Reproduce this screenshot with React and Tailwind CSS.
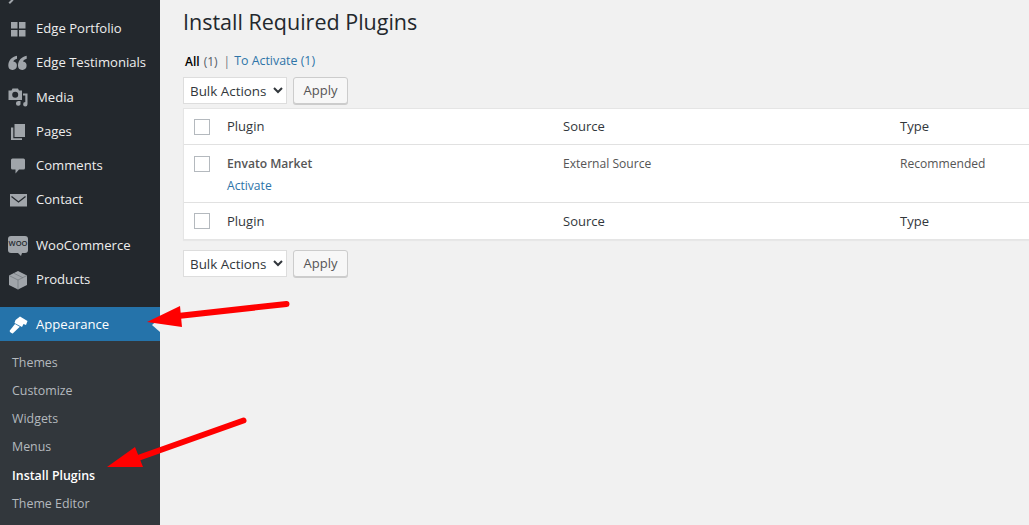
import React from "react";

const fontStack = { fontFamily: '"Open Sans", sans-serif' };

const GridIcon = () => (
  <svg viewBox="0 0 20 20" className="w-5 h-5" fill="#a0a5aa">
    <path d="M3 3h6.500v6.500H3zM11 3h6.500v6.500H11zM3 11h6.500v6.500H3zM11 11h6.500v6.500H11z" />
  </svg>
);

const QuoteIcon = () => (
  <svg viewBox="0 0 20 20" className="w-5 h-5" fill="#a0a5aa">
    <path d="M9 2.800C3.800 3.800.3 7.500.3 12.600A4.300 4.300 0 1 0 5.300 8.400C5.800 7.200 7.300 6.300 9 5.800z" />
    <path d="M18.700 2.800c-5.200 1-8.700 4.700-8.700 9.800a4.300 4.300 0 1 0 5-4.200c.5-1.200 2-2.100 3.700-2.600z" />
  </svg>
);

const MediaIcon = () => (
  <svg viewBox="0 0 20 20" className="w-5 h-5" fill="#a0a5aa">
    <path
      fillRule="evenodd"
      d="M.5 3.500h3L4.500 1.500h5.500l1 2h3v9.500H.5zM7.200 4.800a3 3 0 1 0 0 6 3 3 0 0 0 0-6z"
    />
    <path d="M15 6.500h4.500v10.800a2.200 2.200 0 1 1-2.200-2.200V8.500H15zM8 14h4.500v2.200a2.300 2.300 0 1 1-2.300-2z" />
  </svg>
);

const PagesIcon = () => (
  <svg viewBox="0 0 20 20" className="w-5 h-5" fill="#a0a5aa">
    <path d="M6.500 2H17v13H6.500z" />
    <path d="M3 5.500h2.300V16.300H14V18H3z" />
  </svg>
);

const CommentsIcon = () => (
  <svg viewBox="0 0 20 20" className="w-5 h-5" fill="#a0a5aa">
    <path d="M4.500 2.500h11A1.500 1.500 0 0 1 17 4v8a1.500 1.500 0 0 1-1.500 1.500H11l-3.500 4v-4h-3A1.500 1.500 0 0 1 3 12V4a1.500 1.500 0 0 1 1.500-1.500z" />
  </svg>
);

const MailIcon = () => (
  <svg viewBox="0 0 20 20" className="w-5 h-5">
    <path d="M2 4h17v12.500H2z" fill="#a0a5aa" />
    <path d="M3.500 6.500l7 5.500 7-5.500" fill="none" stroke="#23282d" strokeWidth="1.300" />
  </svg>
);

const BoxIcon = () => (
  <svg viewBox="0 0 20 20" className="w-5 h-5">
    <path d="M10 1l9 4.500v9.500L10 19.500 1 15V5.500z" fill="#a0a5aa" />
    <path d="M1 5.500L10 10l9-4.500M10 10v9.500M6 3.300l9 4.500" fill="none" stroke="#6f757b" strokeWidth="0.700" />
  </svg>
);

const BrushIcon = () => (
  <svg viewBox="0 0 20 20" className="w-5 h-5" fill="#ffffff">
    <path d="M7.500 5L12 1.500 19.500 6 18 10l-2.500-1L14 12 6.500 8z" />
    <path d="M7 9l4.800 2.800-6.800 6.400c-1 .9-3.800-1.400-3.200-2.700z" />
  </svg>
);

const WooIcon = () => (
  <span className="relative flex items-center justify-center w-5 h-[17px] mt-[-3px] rounded-[3px] bg-[#a0a5aa] text-[7.5px] font-semibold leading-none text-[#23282d]">
    WOO
    <span className="absolute bottom-[-3px] left-[10px] w-0 h-0 border-l-[3px] border-r-[1px] border-t-[3px] border-l-transparent border-r-transparent border-t-[#a0a5aa]"></span>
  </span>
);

const MenuItem = ({ icon, label }) => (
  <a className="flex items-center h-[34.2px] pl-2 text-[13.1px] text-[#eeeeee]">
    <span className="w-5 mr-2 flex justify-center">{icon}</span>
    {label}
  </a>
);

const subItems = ["Themes", "Customize", "Widgets", "Menus", "Install Plugins", "Theme Editor"];

const Sidebar = () => (
  <div className="w-40 shrink-0 bg-[#23282d] flex flex-col pt-[12px] relative">
    {/* tail of the icon scrolled off the top */}
    <span className="absolute left-[10px] top-[-1px] w-[2px] h-[5px] rotate-45 bg-[#a0a5aa]"></span>

    <MenuItem icon={<GridIcon />} label="Edge Portfolio" />
    <MenuItem icon={<QuoteIcon />} label="Edge Testimonials" />
    <MenuItem icon={<MediaIcon />} label="Media" />
    <MenuItem icon={<PagesIcon />} label="Pages" />
    <MenuItem icon={<CommentsIcon />} label="Comments" />
    <MenuItem icon={<MailIcon />} label="Contact" />

    <div className="mt-[11.500px]">
      <MenuItem icon={<WooIcon />} label="WooCommerce" />
      <MenuItem icon={<BoxIcon />} label="Products" />
    </div>

    {/* active menu */}
    <div className="relative mt-[10px] flex items-center h-[34px] pl-2 pt-px bg-[#2573aa] text-[13.1px] text-white">
      <span className="w-5 mr-2 flex justify-center">
        <BrushIcon />
      </span>
      Appearance
      <span className="absolute right-0 top-[11px] w-0 h-0 border-y-[7px] border-r-[8px] border-y-transparent border-r-[#f1f1f1]"></span>
    </div>

    <div className="flex-1 bg-[#32373c] pt-[8px]">
      {subItems.map((item) => (
        <div
          key={item}
          className={`h-[28.2px] pl-3 flex items-center text-[12.4px] ${
            item === "Install Plugins" ? "font-semibold text-white" : "text-[#b4b9be]"
          }`}
        >
          {item}
        </div>
      ))}
    </div>
  </div>
);

const Checkbox = () => <span className="block w-4 h-4 bg-white border border-[#b4b9be]"></span>;

const BulkBar = () => (
  <div className="flex items-center gap-[6px]">
    <select className="w-[104px] h-[27px] pl-[2px] bg-white border border-[#dddddd] text-[13.4px] text-[#32373c]">
      <option>Bulk Actions</option>
    </select>
    <button className="w-[55px] h-[27px] rounded-[3px] bg-[#f7f7f7] border border-[#cccccc] shadow-[0_1px_0_#cccccc] text-[13px] text-[#555555]">
      Apply
    </button>
  </div>
);

const HeadRow = ({ border, textOffset }) => (
  <div
    className={`grid grid-cols-[43px_336px_337px_337px] h-[36px] items-center text-[13px] text-[#32373c] ${border}`}
  >
    <span className="pl-[10px]">
      <Checkbox />
    </span>
    <span className={textOffset}>Plugin</span>
    <span className={textOffset}>Source</span>
    <span className={textOffset}>Type</span>
  </div>
);

const App = () => {
  return (
    <div className="relative flex w-full h-screen overflow-hidden bg-[#f1f1f1]" style={fontStack}>
      <Sidebar />

      <div className="flex-1 min-w-0 pl-[23px]">
        <h1 className="mt-[6px] h-[32px] text-[21.5px] leading-[32px] text-[#23282d]">Install Required Plugins</h1>

        <div className="mt-[14px] h-[19px] pl-[2px] flex items-center text-[12px] text-[#555d66]">
          <span className="font-semibold text-black">All</span>
          <span className="ml-1">(1)</span>
          <span className="ml-[6px] mr-[4px] text-[#72777c]">|</span>
          <span className="text-[12.4px] text-[#2e74a8]">To Activate (1)</span>
        </div>

        <div className="mt-[6px]">
          <BulkBar />
        </div>

        <div className="mt-[4px] w-[1100px] bg-white border border-[#e5e5e5] shadow-[0_1px_1px_rgba(0,0,0,0.04)]">
          <HeadRow border="border-b border-[#e1e1e1]" textOffset="" />
          <div className="grid grid-cols-[43px_336px_337px_337px] h-[58px] text-[12.1px] text-[#555555] border-b border-[#e1e1e1]">
            <span className="pl-[10px] pt-[11px]">
              <Checkbox />
            </span>
            <div className="pt-[10px]">
              <div className="font-semibold">Envato Market</div>
              <div className="mt-[4px] text-[#2e74a8]">Activate</div>
            </div>
            <span className="pt-[10px]">External Source</span>
            <span className="pt-[10px]">Recommended</span>
          </div>
          <HeadRow border="" textOffset="pt-[2px]" />
        </div>

        <div className="mt-[10px]">
          <BulkBar />
        </div>
      </div>

      {/* red annotation arrows */}
      <svg className="absolute inset-0 w-full h-full pointer-events-none" viewBox="0 0 1029 525">
        <path d="M286.500 304L178 316" stroke="#ff0000" strokeWidth="6" strokeLinecap="round" fill="none" />
        <path d="M147 322L180 306L182 327z" fill="#ff0000" />
        <path d="M243.500 420.500L138 458" stroke="#ff0000" strokeWidth="6" strokeLinecap="round" fill="none" />
        <path d="M107 467L135 447L143 467z" fill="#ff0000" />
      </svg>
    </div>
  );
};

export default App;
